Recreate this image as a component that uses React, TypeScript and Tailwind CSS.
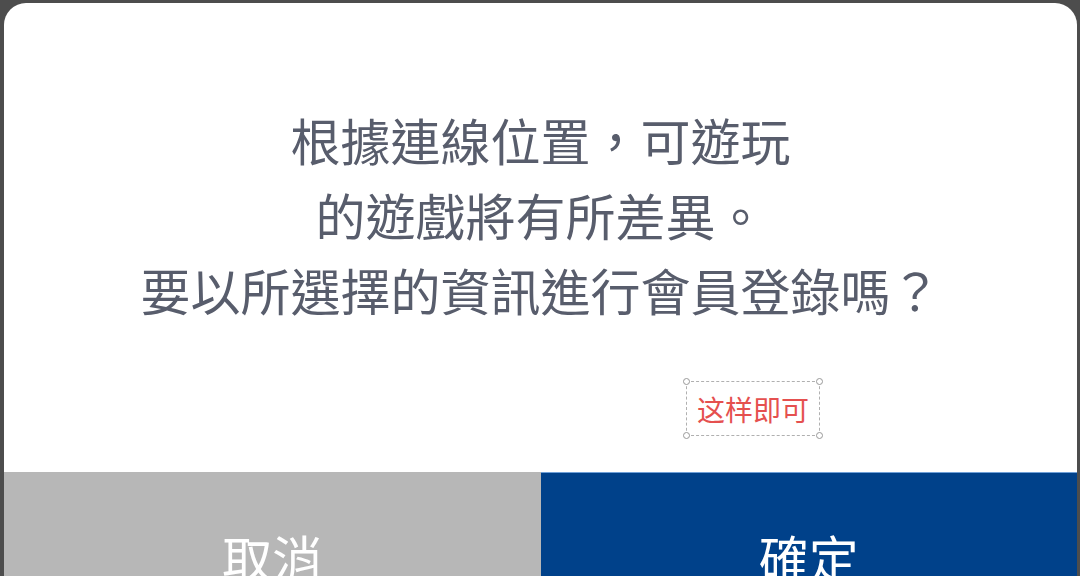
export default function App() {
  const font = { fontFamily: '"Noto Sans CJK TC", "Noto Sans CJK SC", sans-serif' }
  return (
    <div
      className="h-[576px] w-[1080px] overflow-hidden bg-[#4d4d4d] pl-[4px] pr-[3px] pt-[3px]"
      style={font}
    >
      <div className="relative flex h-[700px] flex-col overflow-hidden rounded-t-[22px] bg-white">
        <div className="flex h-[469px] flex-col items-center pt-[99px] text-center text-[50px] leading-[75px] text-[#585d6c]">
          <p>根據連線位置，可遊玩</p>
          <p>的遊戲將有所差異。</p>
          <p>要以所選擇的資訊進行會員登錄嗎？</p>
        </div>

        {/* annotation label */}
        <div className="absolute left-[682px] top-[378px] flex h-[55px] w-[134px] items-center justify-center border border-dashed border-[#b0b0b0] text-[28px] text-[#e5504f]">
          这样即可
          <span className="absolute -left-[4px] -top-[4px] h-[7px] w-[7px] rounded-full border border-[#999] bg-white" />
          <span className="absolute -right-[4px] -top-[4px] h-[7px] w-[7px] rounded-full border border-[#999] bg-white" />
          <span className="absolute -bottom-[4px] -left-[4px] h-[7px] w-[7px] rounded-full border border-[#999] bg-white" />
          <span className="absolute -bottom-[4px] -right-[4px] h-[7px] w-[7px] rounded-full border border-[#999] bg-white" />
        </div>

        <div className="flex h-[168px] text-[50px] text-white">
          <button className="flex flex-1 items-center justify-center bg-[#b7b7b7]">取消</button>
          <button className="flex flex-1 items-center justify-center border-t border-[#6fa0d8] bg-[#00418a]">
            確定
          </button>
        </div>
      </div>
    </div>
  )
}
